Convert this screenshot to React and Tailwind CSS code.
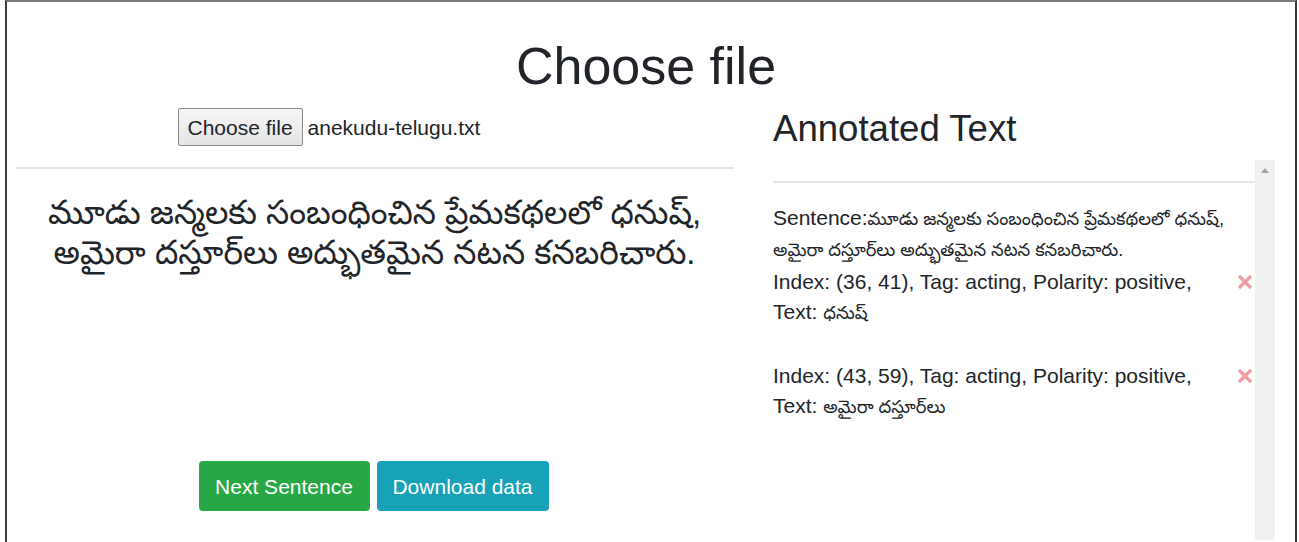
import React from 'react'

const sentence =
  'మూడు జన్మలకు సంబంధించిన ప్రేమకథలలో ధనుష్, అమైరా దస్తూర్‌లు అద్భుతమైన నటన కనబరిచారు.'

const sentenceLines = [
  'మూడు జన్మలకు సంబంధించిన ప్రేమకథలలో ధనుష్,',
  'అమైరా దస్తూర్‌లు అద్భుతమైన నటన కనబరిచారు.',
]

const annotations = [
  { index: '(36, 41)', tag: 'acting', polarity: 'positive', text: 'ధనుష్' },
  { index: '(43, 59)', tag: 'acting', polarity: 'positive', text: 'అమైరా దస్తూర్‌లు' },
]

function RemoveIcon() {
  return (
    <svg width="16" height="16" viewBox="0 0 16 16" className="shrink-0">
      <path d="M2 2 L14 14 M14 2 L2 14" stroke="#ee9ca3" strokeWidth="3.2" strokeLinecap="butt" />
    </svg>
  )
}

export default function App() {
  return (
    <div
      className="ml-[5px] w-[1292px] h-[542px] overflow-hidden border-x-2 border-t-2 border-x-[#3a3a3a] border-t-[#7a7a7a] bg-white text-[#212529]"
      style={{ fontFamily: '"Liberation Sans", Arial, "Noto Sans Telugu", sans-serif' }}
    >
      {/* Page title */}
      <h1 className="pt-[33px] text-center text-[52px] leading-[1.2] font-normal pr-[10px]">Choose file</h1>

      <div className="flex">
        {/* Left column: file picker, current sentence, actions */}
        <div className="ml-[8px] w-[719px] flex flex-col">
          <div className="mt-[11px] mx-auto w-[394px] flex items-center">
            <button className="h-[38px] px-[9px] text-[21px] border border-[#8a8a8a] rounded-[2px] bg-gradient-to-b from-[#f6f6f6] to-[#e4e4e4]">
              Choose file
            </button>
            <span className="ml-[5px] text-[21px]">anekudu-telugu.txt</span>
          </div>
          <hr className="mt-[21px] border-0 h-[2px] bg-[#e6e6e6]" />
          <p className="mt-[24px] h-[268px] text-center text-[33px] leading-[40px]">
            {sentenceLines.map((line, i) => (
              <span key={i} className="block whitespace-nowrap">
                {line}
              </span>
            ))}
          </p>
          <div className="flex justify-center gap-[7px] pr-[2px]">
            <button className="h-[50px] w-[171px] rounded-[4px] bg-[#28a745] text-white text-[21px]">Next Sentence</button>
            <button className="h-[50px] w-[172px] rounded-[4px] bg-[#17a2b8] text-white text-[21px]">Download data</button>
          </div>
        </div>

        {/* Right column: annotations list */}
        <div className="ml-[39px] w-[502px] flex flex-col">
          <h2 className="mt-[10px] text-[36.6px] leading-[1.2] font-normal">Annotated Text</h2>
          <div className="mt-[9px] flex h-[380px]">
            <div className="flex-1 text-[21px] leading-[30px]">
              <hr className="mt-[21px] border-0 h-[2px] bg-[#e6e6e6]" />
              <div className="mt-[20px]">
                <div className="pr-[6px]">
                  Sentence:<span className="text-[18px]">{sentence}</span>
                </div>
                {annotations.map((a, i) => (
                  <div key={i} className={i === 0 ? 'mt-[2px]' : 'mt-[33px]'}>
                    <div className="flex items-center justify-between pr-[2px]">
                      <span>
                        Index: {a.index}, Tag: {a.tag}, Polarity: {a.polarity},
                      </span>
                      <RemoveIcon />
                    </div>
                    <div>
                      Text: <span className="text-[18px]">{a.text}</span>
                    </div>
                  </div>
                ))}
              </div>
            </div>
            {/* scrollbar track */}
            <div className="w-[20px] bg-[#f1f1f1] flex justify-center pt-[8px]">
              <div className="w-0 h-0 border-x-[4px] border-x-transparent border-b-[5px] border-b-[#a3a3a3]" />
            </div>
          </div>
        </div>
      </div>
    </div>
  )
}
